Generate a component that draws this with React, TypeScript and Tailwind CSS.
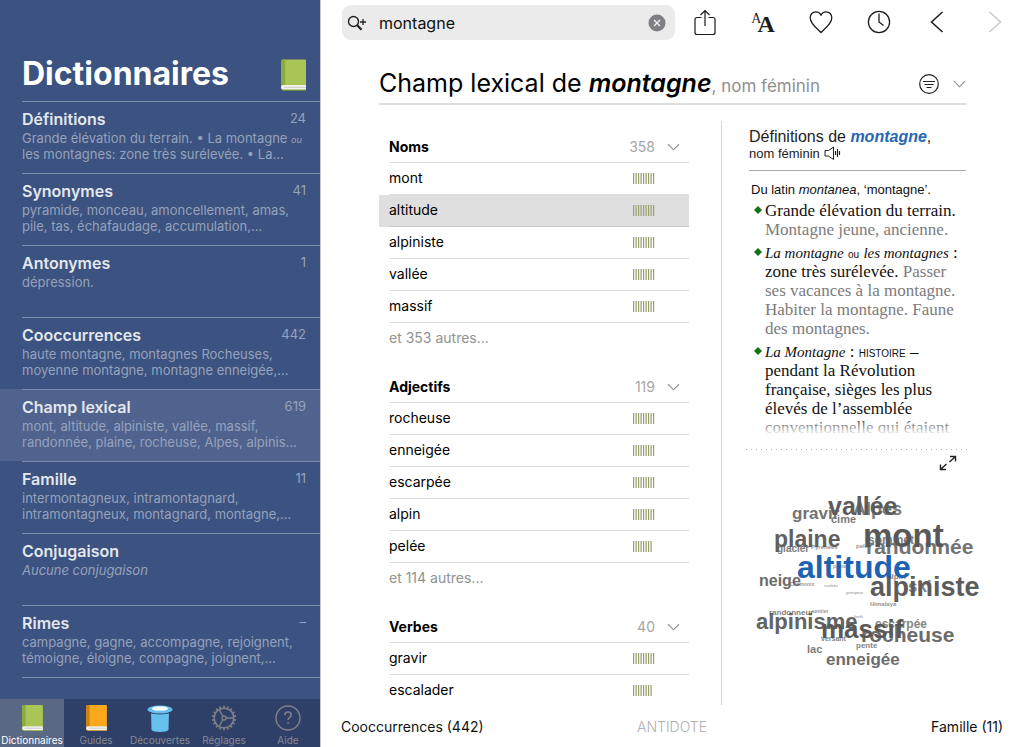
import type { ReactNode } from "react";

type Entry = { title: string; count: string; text: ReactNode; active?: boolean };

const entries: Entry[] = [
  {
    title: "Définitions",
    count: "24",
    text: (
      <>
        Grande élévation du terrain. • La montagne <i className="text-[9px] leading-none">ou</i>
        <br />
        les montagnes: zone très surélevée. • La...
      </>
    ),
  },
  { title: "Synonymes", count: "41", text: <>pyramide, monceau, amoncellement, amas,<br />pile, tas, échafaudage, accumulation,...</> },
  { title: "Antonymes", count: "1", text: "dépression." },
  { title: "Cooccurrences", count: "442", text: <>haute montagne, montagnes Rocheuses,<br />moyenne montagne, montagne enneigée,...</> },
  { title: "Champ lexical", count: "619", active: true, text: <>mont, altitude, alpiniste, vallée, massif,<br />randonnée, plaine, rocheuse, Alpes, alpinis...</> },
  { title: "Famille", count: "11", text: <>intermontagneux, intramontagnard,<br />intramontagneux, montagnard, montagne,...</> },
  { title: "Conjugaison", count: "", text: <i>Aucune conjugaison</i> },
  { title: "Rimes", count: "–", text: <>campagne, gagne, accompagne, rejoignent,<br />témoigne, éloigne, compagne, joignent,...</> },
];

type Group = { name: string; count: number; words: [string, number][]; more?: string; selected?: string };

const groups: Group[] = [
  {
    name: "Noms",
    count: 358,
    words: [["mont", 9], ["altitude", 9], ["alpiniste", 9], ["vallée", 9], ["massif", 9]],
    more: "et 353 autres...",
    selected: "altitude",
  },
  {
    name: "Adjectifs",
    count: 119,
    words: [["rocheuse", 9], ["enneigée", 9], ["escarpée", 9], ["alpin", 9], ["pelée", 8]],
    more: "et 114 autres...",
  },
  { name: "Verbes", count: 40, words: [["gravir", 9], ["escalader", 8]] },
];

type CloudWord = { t: string; x: number; y: number; s: number; c: string };

const cloud: CloudWord[] = [
  { t: "escalader", x: 84, y: 107, s: 3, c: "#aaaaaa" },
  { t: "grimpeur", x: 106, y: 114, s: 4, c: "#aaaaaa" },
  { t: "forêt", x: 114, y: 138, s: 4, c: "#a5a5a5" },
  { t: "pentu", x: 93, y: 88, s: 5, c: "#a0a0a0" },
  { t: "sentier", x: 72, y: 133, s: 5, c: "#999999" },
  { t: "Chamonix", x: 50, y: 106, s: 5, c: "#999999" },
  { t: "Pyrénées", x: 71, y: 69, s: 6, c: "#959595" },
  { t: "Himalaya", x: 130, y: 126, s: 6, c: "#959595" },
  { t: "pelée", x: 116, y: 68, s: 6, c: "#959595" },
  { t: "versant", x: 81, y: 161, s: 7, c: "#858585" },
  { t: "alpin", x: 147, y: 99, s: 8, c: "#858585" },
  { t: "randonneur", x: 29, y: 135, s: 8, c: "#808080" },
  { t: "pente", x: 116, y: 168, s: 8, c: "#858585" },
  { t: "glacier", x: 37, y: 72, s: 10, c: "#7c7c7c" },
  { t: "lac", x: 67, y: 173, s: 11, c: "#7c7c7c" },
  { t: "cime", x: 91, y: 43, s: 11, c: "#7c7c7c" },
  { t: "escarpée", x: 135, y: 148, s: 12, c: "#858585" },
  { t: "sommet", x: 128, y: 64, s: 12, c: "#808080" },
  { t: "neige", x: 19, y: 106, s: 16, c: "#6c6c6c" },
  { t: "ski", x: 168, y: 112, s: 17, c: "#858585" },
  { t: "enneigée", x: 86, y: 185, s: 17, c: "#6c6c6c" },
  { t: "gravir", x: 52, y: 39, s: 17, c: "#737373" },
  { t: "Alpes", x: 113, y: 35, s: 18, c: "#7c7c7c" },
  { t: "randonnée", x: 126, y: 74, s: 21, c: "#737373" },
  { t: "rocheuse", x: 121, y: 162, s: 21, c: "#6c6c6c" },
  { t: "alpinisme", x: 16, y: 149, s: 22, c: "#636363" },
  { t: "plaine", x: 34, y: 67, s: 23, c: "#606060" },
  { t: "vallée", x: 88, y: 35, s: 25, c: "#5c5c5c" },
  { t: "massif", x: 81, y: 158, s: 26, c: "#595959" },
  { t: "alpiniste", x: 130, y: 116, s: 27, c: "#5c5c5c" },
  { t: "mont", x: 123, y: 67, s: 33, c: "#585858" },
  { t: "altitude", x: 57, y: 98, s: 32, c: "#1c63b3" },
];

function Book({ cover, spine, edge, className }: { cover: string; spine: string; edge: string; className: string }) {
  return (
    <svg viewBox="0 0 24 30" className={className} aria-hidden="true">
      <path d="M2 0h21a1 1 0 0 1 1 1v24H0V2a2 2 0 0 1 2-2z" fill={cover} />
      <path d="M2 0h2v25H0V2a2 2 0 0 1 2-2z" fill={spine} />
      <path d="M0 25h24v4a1 1 0 0 1-1 1H2a2 2 0 0 1-2-2z" fill={edge} />
      <path d="M2 24.5h22v4.5H2.500a2 2 0 0 1-.5-4.500z" fill="#f2f2ee" />
      <path d="M3 26.800h21" stroke="#c6c9c4" strokeWidth="0.900" />
    </svg>
  );
}

function Hat() {
  return (
    <svg viewBox="0 0 26 27" className="h-[27px] w-[26px]" aria-hidden="true">
      <path d="M4 5h18l-.5 20c-2 2.500-15 2.500-17 0z" fill="#66c0ee" />
      <ellipse cx="13" cy="4.500" rx="12.500" ry="4" fill="#66c0ee" />
      <path d="M4 7.300c4 1.600 14 1.600 18 0v1c-4 1.500-14 1.500-18 0z" fill="#2f4068" />
      <ellipse cx="13" cy="3.500" rx="8" ry="2.300" fill="#f4fbff" />
    </svg>
  );
}

const teeth = Array.from({ length: 18 }, (_, i) => i * 20);

function Gear() {
  return (
    <svg viewBox="0 0 26 26" className="size-[26px]" fill="none" stroke="#7f8086" aria-hidden="true">
      <circle cx="13" cy="13" r="9.800" strokeWidth="1.500" />
      {teeth.map((a) => (
        <path key={a} d="M13 3.500V.8" strokeWidth="1.700" transform={`rotate(${a} 13 13)`} />
      ))}
      <circle cx="13" cy="13" r="2" strokeWidth="1.300" />
      <path d="M15 13h7.500M12 11.300 8.200 4.800M12 14.700l-3.800 6.500" strokeWidth="1.300" />
    </svg>
  );
}

function Help() {
  return (
    <svg viewBox="0 0 26 26" className="size-[26px]" fill="none" stroke="#7f8086" aria-hidden="true">
      <circle cx="13" cy="13" r="12" strokeWidth="1.400" />
      <path d="M9.800 10.200c0-2 1.400-3.200 3.200-3.200s3.200 1.200 3.200 2.900c0 2.300-3.100 2.600-3.100 5.100" strokeWidth="1.600" />
      <circle cx="13.100" cy="18" r="0.600" fill="#7f8086" />
    </svg>
  );
}

function Chevron({ className }: { className: string }) {
  return (
    <svg viewBox="0 0 14 8" className={className} fill="none" stroke="currentColor" strokeWidth="1.200" aria-hidden="true">
      <path d="m1 1 6 6 6-6" />
    </svg>
  );
}

function Bars({ count }: { count: number }) {
  return (
    <svg viewBox="0 0 24 11" className="h-[11px] w-6" aria-label={`Force ${count}`} role="img">
      {Array.from({ length: count }, (_, i) => (
        <rect key={i} x={i * 2.5} y="0" width="1.200" height="11" fill="#9a9e6c" />
      ))}
    </svg>
  );
}

const green = <Book cover="#a8c556" spine="#8aab3f" edge="#7f9f3a" className="h-[26px] w-[21px]" />;
const tabs: { name: string; icon: ReactNode }[] = [
  { name: "Dictionnaires", icon: green },
  { name: "Guides", icon: <Book cover="#fba81c" spine="#c98412" edge="#c07d12" className="h-[26px] w-[21px]" /> },
  { name: "Découvertes", icon: <Hat /> },
  { name: "Réglages", icon: <Gear /> },
  { name: "Aide", icon: <Help /> },
];

function Sidebar() {
  return (
    <aside className="flex w-[321px] shrink-0 flex-col border-r border-[#c5c8cf] bg-[#3c5280]">
      <header className="flex h-[101px] items-end justify-between pr-[14px] pb-[10px] pl-[22px]">
        <h1 className="text-[32px] leading-[34px] font-bold text-white">Dictionnaires</h1>
        <Book cover="#a8c556" spine="#8aab3f" edge="#7f9f3a" className="h-[32px] w-[25px]" />
      </header>
      <nav className="flex-1" aria-label="Dictionnaires">
        {entries.map((e) => (
          <a key={e.title} href="#" aria-current={e.active ? "page" : undefined} className={`block h-[72px] pl-[22px] ${e.active ? "bg-[#50638e]" : ""}`}>
            <div className="border-t border-[#7e8cac] pt-[7px] pr-[14px]">
              <div className="flex h-[21px] justify-between leading-5">
                <span className="text-[16px] font-semibold text-[#e3e7ee]">{e.title}</span>
                <span className="text-[13px] leading-[18px] text-[#96a2bc]">{e.count}</span>
              </div>
              <p className="text-[13px] leading-4 whitespace-nowrap text-[#96a2bc]">{e.text}</p>
            </div>
          </a>
        ))}
        <div className="ml-[22px] border-t border-[#7e8cac]" />
      </nav>
      <nav className="grid h-12 grid-cols-5 bg-[#2f4068]" aria-label="Sections">
        {tabs.map((t, i) => (
          <button key={t.name} className={`flex flex-col items-center justify-between pt-[6px] pb-px text-[10px] leading-3 ${i === 0 ? "bg-[#5b6884] text-white" : "text-[#858994]"}`}>
            {t.icon}
            <span>{t.name}</span>
          </button>
        ))}
      </nav>
    </aside>
  );
}

function Toolbar() {
  const button = "flex size-[30px] items-center justify-center";
  return (
    <div className="flex items-center pt-[5px] pl-[21px]">
      <label className="flex h-[35px] flex-1 items-center rounded-[9px] bg-[#ebebeb] px-[5px]">
        <svg viewBox="0 0 20 16" className="h-4 w-5" fill="none" stroke="#222222" aria-hidden="true">
          <circle cx="6.500" cy="6.500" r="5" strokeWidth="1.400" />
          <path d="m10 10 4.500 4.800" strokeWidth="2.200" />
          <path d="M13 7h6M16 4v6" strokeWidth="1.300" />
        </svg>
        <input aria-label="Rechercher" defaultValue="montagne" className="ml-3 min-w-0 flex-1 bg-transparent text-[16px] text-[#111111] outline-none" />
        <button aria-label="Effacer" className="mr-1">
          <svg viewBox="0 0 18 18" className="size-[18px]" aria-hidden="true">
            <circle cx="9" cy="9" r="8.500" fill="#808084" />
            <path d="m6 6 6 6m0-6-6 6" stroke="#f2f2f2" strokeWidth="1.400" />
          </svg>
        </button>
      </label>
      <div className="flex w-[349px] shrink-0 gap-7 pb-px pl-[15px] text-[#1c1c1c]">
        <button aria-label="Partager" className={button}>
          <svg viewBox="0 0 22 27" className="h-[27px] w-[22px]" fill="none" stroke="currentColor" strokeWidth="1.200" aria-hidden="true">
            <path d="M7.500 8.500H3a2 2 0 0 0-2 2v13a2 2 0 0 0 2 2h16a2 2 0 0 0 2-2v-13a2 2 0 0 0-2-2h-4.500M11 17V1.500M6.500 6 11 1.500 15.500 6" />
          </svg>
        </button>
        <button aria-label="Taille du texte" className={`${button} font-['Liberation_Serif',serif]`}>
          <span className="-mr-1 self-start pt-1 text-[14px] leading-4">A</span>
          <span className="self-end text-[24px] leading-[26px] font-semibold">A</span>
        </button>
        <button aria-label="Favoris" className={button}>
          <svg viewBox="0 0 24 24" className="size-6" fill="none" stroke="currentColor" strokeWidth="1.300" strokeLinejoin="round" aria-hidden="true">
            <path d="M12 22.500C9 19.500 1.200 14 1.200 7.800c0-3.400 2.400-6 5.500-6C9 1.800 11.200 3 12 5.300c.8-2.300 3-3.500 5.300-3.500 3.100 0 5.500 2.600 5.500 6C22.800 14 15 19.500 12 22.500z" />
          </svg>
        </button>
        <button aria-label="Historique" className={button}>
          <svg viewBox="0 0 24 24" className="size-6" fill="none" stroke="currentColor" strokeWidth="1.300" aria-hidden="true">
            <circle cx="12" cy="12" r="10.600" />
            <path d="M12 3.500V12l4.500 3.500" />
          </svg>
        </button>
        <button aria-label="Précédent" className={button}>
          <svg viewBox="0 0 14 24" className="h-6 w-[14px]" fill="none" stroke="currentColor" strokeWidth="1.500" aria-hidden="true">
            <path d="M12.500 2 1.500 12l11 10" />
          </svg>
        </button>
        <button aria-label="Suivant" disabled className={`${button} text-[#c9c9c9]`}>
          <svg viewBox="0 0 14 24" className="h-6 w-[14px]" fill="none" stroke="currentColor" strokeWidth="1.500" aria-hidden="true">
            <path d="m1.500 2 11 10-11 10" />
          </svg>
        </button>
      </div>
    </div>
  );
}

function WordGroup({ group }: { group: Group }) {
  return (
    <section className="mb-4">
      <div className="ml-[10px] flex h-8 items-center border-b border-[#dedede] pr-[9px] text-[14px]">
        <h3 className="flex-1 font-bold text-black">{group.name}</h3>
        <span className="text-[#a5a5a5]">{group.count}</span>
        <button aria-label={`Replier ${group.name}`} className="ml-3 text-[#8c8c8c]">
          <Chevron className="h-[8px] w-[13px]" />
        </button>
      </div>
      <ul>
        {group.words.map(([word, force]) => (
          <li key={word} className={`h-8 pl-[10px] ${group.selected === word ? "bg-[#dfdfdf]" : ""}`}>
            <button className={`flex h-8 w-full items-center justify-between border-b pr-8 text-left text-[14px] text-black ${group.selected === word ? "border-[#c8c8c8]" : "border-[#dedede]"}`}>
              <span className="pb-[2px]">{word}</span>
              <Bars count={force} />
            </button>
          </li>
        ))}
      </ul>
      {group.more && (
        <a href="#" className="ml-[10px] block h-8 text-[14px] leading-[30px] text-[#929292]">
          {group.more}
        </a>
      )}
    </section>
  );
}

function Sense({ children }: { children: ReactNode }) {
  return (
    <li className="mb-1 flex">
      <svg viewBox="0 0 8 8" className="mt-[5px] mr-[3px] size-2 shrink-0" fill="#117311" aria-hidden="true">
        <path d="m4 0 4 4-4 4-4-4z" />
      </svg>
      <p className="whitespace-nowrap">{children}</p>
    </li>
  );
}

function Definitions() {
  const sans = "font-['Liberation_Sans',sans-serif]";
  return (
    <div className="flex w-[217px] shrink-0 flex-col">
      <h3 className={`${sans} pt-[7px] text-[16px] leading-[18px] text-[#222222]`}>
        Définitions de <a href="#" className="font-bold text-[#2468b4] italic">montagne</a>,
      </h3>
      <div className={`${sans} flex h-[25px] items-start gap-1 border-b border-[#a8a8a8] text-[13px] leading-4 text-[#222222]`}>
        nom féminin
        <button aria-label="Écouter">
          <svg viewBox="0 0 17 14" className="h-[14px] w-[17px]" fill="none" stroke="#222222" aria-hidden="true">
            <path d="M1 4.500h3.500L9.500 1v12.500L4.500 10H1z" />
            <path d="M11.500 5v4M13.500 3v8M15.500 5v4" strokeWidth="1.200" />
          </svg>
        </button>
      </div>
      <div className="relative h-[264px] overflow-hidden pt-[11px]">
        <p className={`${sans} pl-[2px] text-[13px] leading-4 text-[#111111]`}>
          Du latin <i>montanea</i>, ‘montagne’.
        </p>
        <ul className="pt-[3px] pl-[5px] font-['Liberation_Serif',serif] text-[17px] leading-[19px] text-[#111111]">
          <Sense>
            Grande élévation du terrain.
            <br />
            <span className="text-[#7c7c7c]">Montagne jeune, ancienne.</span>
          </Sense>
          <Sense>
            <i className="text-[15px] leading-none">La montagne</i> <span className={`${sans} text-[10px] leading-none`}>ou</span> <i className="text-[15px] leading-none">les montagnes</i> :<br />
            zone très surélevée. <span className="text-[#7c7c7c]">Passer<br />ses vacances à la montagne.<br />Habiter la montagne. Faune<br />des montagnes.</span>
          </Sense>
          <Sense>
            <i className="text-[15px] leading-none">La Montagne</i> : <span className={`${sans} text-[10px] leading-none`}>HISTOIRE</span> –<br />
            pendant la Révolution
            <br />
            française, sièges les plus
            <br />
            élevés de l’assemblée
            <br />
            conventionnelle qui étaient
          </Sense>
        </ul>
        <div className="absolute inset-x-0 bottom-0 h-4 bg-linear-to-b from-white/20 to-white" />
      </div>
      <div className="mt-[14px] -mr-[2px] -ml-[3px] h-px shrink-0 bg-[repeating-linear-gradient(90deg,#b4b4b4_0_1px,transparent_1px_5px)]" />
      <button aria-label="Agrandir" className="mt-[5px] mr-[9px] self-end">
        <svg viewBox="0 0 18 16" className="h-4 w-[18px]" fill="none" stroke="#222222" strokeWidth="1.400" aria-hidden="true">
          <path d="m10.500 7 6-5.500M11 1.500h5.500v5M7.500 9l-6 5.500M7 14.500H1.500v-5" />
        </svg>
      </button>
      <svg viewBox="0 0 250 200" className="mt-[9px] -ml-[9px] h-[200px] w-[250px] font-['Liberation_Sans',sans-serif] font-bold" role="img" aria-label="Nuage de mots">
        {cloud.map((w) => (
          <text key={w.t} x={w.x} y={w.y} fontSize={w.s} fill={w.c}>
            {w.t}
          </text>
        ))}
      </svg>
    </div>
  );
}

export default function App() {
  return (
    <div className="flex h-screen overflow-hidden bg-white font-[Inter,sans-serif]">
      <Sidebar />
      <main className="flex min-w-0 flex-1 flex-col">
        <Toolbar />
        <div className="flex min-h-0 flex-1 flex-col px-[58px]">
          <header className="mt-6 flex h-[41px] items-center border-b-2 border-[#dedede]">
            <h2 className="flex-1 text-[25px] text-black">
              Champ lexical de <i className="font-semibold">montagne</i>
              <span className="text-[17px] text-[#8f8f8f]">, nom féminin</span>
            </h2>
            <button aria-label="Filtrer">
              <svg viewBox="0 0 20 20" className="size-5" fill="none" stroke="#222222" strokeWidth="1.200" aria-hidden="true">
                <circle cx="10" cy="10" r="9.300" />
                <path d="M4 7.500h12M5.500 10.500h9M7.500 13.500h5" />
              </svg>
            </button>
            <button aria-label="Replier" className="ml-[14px] text-[#8c8c8c]">
              <Chevron className="h-[8px] w-[13px]" />
            </button>
          </header>
          <div className="mt-4 flex min-h-0 flex-1">
            <div className="mr-8 min-w-0 flex-1 overflow-hidden pt-[10px]">
              {groups.map((g) => (
                <WordGroup key={g.name} group={g} />
              ))}
            </div>
            <div className="mr-[27px] border-l border-[#d4d4d4]" />
            <Definitions />
          </div>
        </div>
        <footer className="grid h-[42px] grid-cols-3 items-center pr-[21px] pl-5 text-[14px] text-[#111111]">
          <a href="#">Cooccurrences (442)</a>
          <span className="text-center font-light text-[#b0b0b0]">ANTIDOTE</span>
          <a href="#" className="text-right">Famille (11)</a>
        </footer>
      </main>
    </div>
  );
}
